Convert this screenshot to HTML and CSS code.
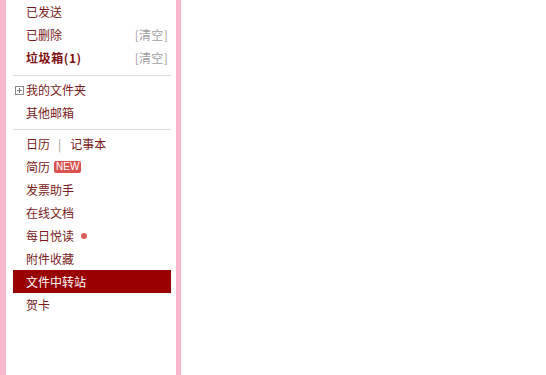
FILE: index.html
```html
<!DOCTYPE html>
<html lang="zh">
<head>
<meta charset="utf-8">
<link rel="stylesheet" href="styles.css">
</head>
<body>
<div class="page">
  <aside class="sidebar">
    <div class="group first">
      <div class="row"><span class="label">已发送</span></div>
      <div class="row"><span class="label">已删除</span><span class="clear">[清空]</span></div>
      <div class="row"><span class="label bold">垃圾箱(1)</span><span class="clear">[清空]</span></div>
    </div>
    <div class="group">
      <div class="row folder"><span class="plus"></span><span class="label">我的文件夹</span></div>
      <div class="row"><span class="label">其他邮箱</span></div>
    </div>
    <div class="group">
      <div class="row"><span class="label">日历</span><span class="pipe">|</span><span class="label">记事本</span></div>
      <div class="row"><span class="label">简历</span><span class="badge">NEW</span></div>
      <div class="row"><span class="label">发票助手</span></div>
      <div class="row"><span class="label">在线文档</span></div>
      <div class="row"><span class="label">每日悦读</span><span class="dot"></span></div>
      <div class="row"><span class="label">附件收藏</span></div>
      <div class="row active"><span class="label">文件中转站</span></div>
      <div class="row"><span class="label">贺卡</span></div>
    </div>
  </aside>
  <main class="content"></main>
</div>
</body>
</html>
```
FILE: styles.css
```css
html, body {
  margin: 0;
  padding: 0;
  background: #ffffff;
}
body {
  font-family: "Microsoft YaHei", "Noto Sans CJK SC", "Liberation Sans", sans-serif;
  font-size: 12px;
  color: #7a1a1a;
}
.page {
  display: flex;
  height: 375px;
  overflow: hidden;
}
.sidebar {
  border-left: 6px solid #f9b8cb;
  border-right: 5px solid #f9b8cb;
  padding: 0 5px 0 7px;
  box-sizing: content-box;
  width: 158px;
  display: flex;
  flex-direction: column;
}
.group {
  border-top: 1px solid #dddddd;
  padding: 2px 0 5px;
}
.group.first {
  border-top: none;
  padding: 0 0 6px;
}
.group.first + .group {
  padding-top: 2px;
}
.row {
  display: flex;
  align-items: center;
  height: 23px;
  padding: 0 3px 0 13px;
  white-space: nowrap;
}
.label {
  color: #7a1a1a;
}
.bold {
  font-weight: bold;
  color: #7f0f0f;
  letter-spacing: 0.6px;
}
.clear {
  margin-left: auto;
  color: #a0a0a0;
  letter-spacing: 0.3px;
}
.folder {
  padding-left: 2px;
}
.plus {
  position: relative;
  width: 7px;
  height: 7px;
  border: 1px solid #8a8a8a;
  margin-right: 2px;
  margin-top: 1px;
}
.plus::before,
.plus::after {
  content: "";
  position: absolute;
  background: #777;
}
.plus::before {
  left: 1px;
  top: 3px;
  width: 5px;
  height: 1px;
}
.plus::after {
  left: 3px;
  top: 1px;
  width: 1px;
  height: 5px;
}
.pipe {
  color: #999999;
  margin: 0 9px 0 8px;
}
.badge {
  margin-left: 4px;
  background: #d9534f;
  color: #ffffff;
  font-family: "Liberation Sans", Arial, sans-serif;
  font-size: 10px;
  line-height: 12px;
  padding: 0 2px;
  border-radius: 2px;
}
.dot {
  width: 6px;
  height: 6px;
  border-radius: 50%;
  background: #d9605c;
  margin-left: 7px;
}
.active {
  background: #990000;
}
.active .label {
  color: #ffffff;
}
.content {
  flex: 1;
}
```
